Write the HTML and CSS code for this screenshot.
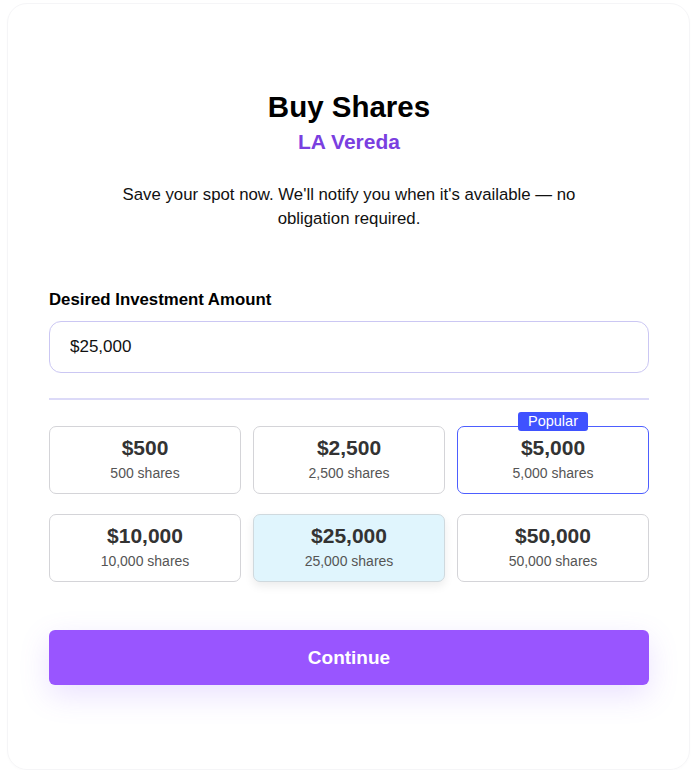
FILE: index.html
```html
<!DOCTYPE html>
<html lang="en">
<head>
<meta charset="utf-8">
<title>Buy Shares</title>
<link rel="stylesheet" href="styles.css">
</head>
<body>
<div class="card">
  <h1 class="title">Buy Shares</h1>
  <div class="subtitle">LA Vereda</div>
  <p class="lead">Save your spot now. We'll notify you when it's available — no obligation required.</p>

  <label class="label" for="amt">Desired Investment Amount</label>
  <input class="amount-input" id="amt" type="text" value="$25,000">

  <div class="divider"></div>

  <div class="options">
    <div class="option"><div class="opt-amount">$500</div><div class="opt-shares">500 shares</div></div>
    <div class="option"><div class="opt-amount">$2,500</div><div class="opt-shares">2,500 shares</div></div>
    <div class="option popular"><span class="badge">Popular</span><div class="opt-amount">$5,000</div><div class="opt-shares">5,000 shares</div></div>
    <div class="option"><div class="opt-amount">$10,000</div><div class="opt-shares">10,000 shares</div></div>
    <div class="option selected"><div class="opt-amount">$25,000</div><div class="opt-shares">25,000 shares</div></div>
    <div class="option"><div class="opt-amount">$50,000</div><div class="opt-shares">50,000 shares</div></div>
  </div>

  <button class="continue" type="button">Continue</button>
</div>
</body>
</html>
```

FILE: styles.css
```css
* { box-sizing: border-box; }
html, body { margin: 0; padding: 0; background: #ffffff; }
body {
  font-family: "Liberation Sans", Arial, Helvetica, sans-serif;
  color: #000;
  padding: 3px 7px 0 7px;
}
.card {
  width: 683px;
  height: 767px;
  border: 1px solid #f5f5f7;
  border-radius: 20px;
  box-shadow: 0 1px 3px rgba(0,0,0,0.02);
  padding: 86px 40px 0 41px;
  display: flex;
  flex-direction: column;
  align-items: stretch;
}
.title {
  margin: 0;
  font-size: 29.5px;
  line-height: 34px;
  font-weight: 700;
  text-align: center;
  color: #000;
}
.subtitle {
  margin-top: 6px;
  font-size: 21px;
  line-height: 24px;
  font-weight: 700;
  color: #7a3fe0;
  text-align: center;
}
.lead {
  margin: 29px auto 0;
  max-width: 480px;
  font-size: 16.8px;
  line-height: 24px;
  text-align: center;
  color: #111;
}
.label {
  margin-top: 59px;
  font-size: 16.8px;
  line-height: 20px;
  font-weight: 700;
  color: #000;
}
.amount-input {
  margin-top: 11px;
  height: 52px;
  width: 100%;
  border: 1px solid #cbc7f3;
  border-radius: 12px;
  padding: 0 20px;
  font-family: inherit;
  font-size: 17px;
  color: #111;
  background: #fff;
  outline: none;
}
.divider {
  margin-top: 25px;
  height: 2px;
  background: #dcdaf8;
}
.options {
  margin-top: 26px;
  display: grid;
  grid-template-columns: repeat(3, 1fr);
  column-gap: 12px;
  row-gap: 20px;
}
.option {
  position: relative;
  height: 68px;
  border: 1px solid #d4d4d8;
  border-radius: 7px;
  background: #fff;
  padding-top: 9px;
  text-align: center;
}
.opt-amount {
  font-size: 21px;
  line-height: 24px;
  font-weight: 700;
  color: #333;
}
.opt-shares {
  margin-top: 4px;
  font-size: 14px;
  line-height: 18px;
  color: #555;
}
.option.popular {
  border: 1.5px solid #4d5eff;
  padding-top: 8.5px;
}
.option.selected {
  background: #e0f5fd;
  border-color: #cfd9de;
  box-shadow: 0 4px 10px rgba(0,0,0,0.08);
}
.badge {
  position: absolute;
  top: -15px;
  left: 50%;
  transform: translateX(-50%);
  background: #3f52ff;
  color: #fff;
  font-size: 14.5px;
  line-height: 19px;
  padding: 0 10px;
  border-radius: 3px;
  white-space: nowrap;
}
.continue {
  margin-top: 48px;
  height: 55px;
  width: 100%;
  border: none;
  border-radius: 6px;
  background: #9955ff;
  color: #fff;
  font-family: inherit;
  font-size: 19px;
  font-weight: 700;
  box-shadow: 0 10px 30px rgba(140, 90, 255, 0.18);
  cursor: pointer;
}
```
